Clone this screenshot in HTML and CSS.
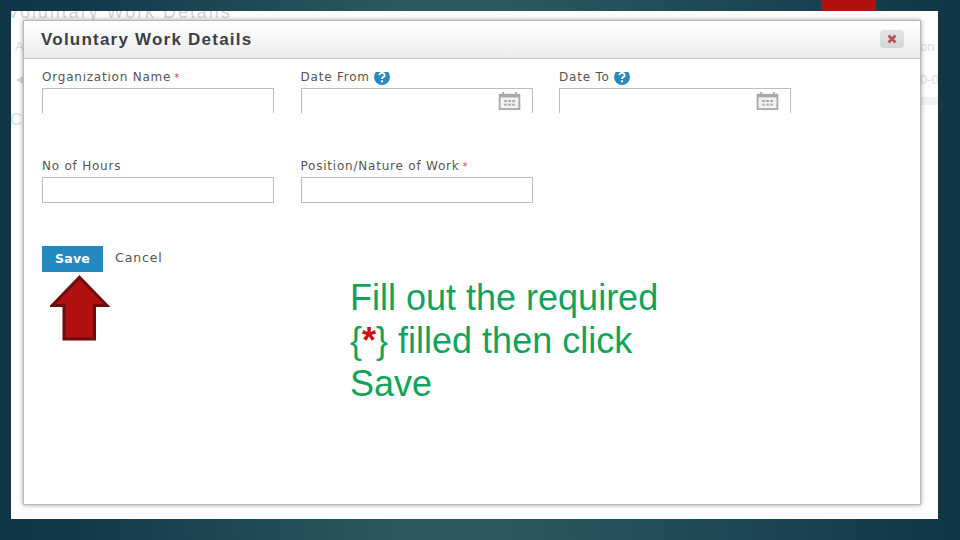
FILE: index.html
```html
<!DOCTYPE html>
<html lang="en">
<head>
<meta charset="utf-8">
<title>Voluntary Work Details</title>
<link rel="stylesheet" href="styles.css">
</head>
<body>
<div class="tab"></div>
<main class="shot">
  <div class="ghost ghost-title">Voluntary Work Details</div>
  <div class="ghost ghost-a">A</div>
  <div class="ghost ghost-arrow"></div>
  <div class="ghost ghost-c">C</div>
  <div class="ghost ghost-on">on</div>
  <div class="ghost ghost-date">0-0</div>
  <div class="ghost-bar"></div>
  <section class="modal">
    <header class="modal-head">
      <h1 class="modal-title">Voluntary Work Details</h1>
      <button class="close" type="button" aria-label="Close">
        <svg width="10" height="10" viewBox="0 0 10 10"><path d="M1.500 1.500l7 7M8.500 1.500l-7 7" stroke="#b8505c" stroke-width="2.600" fill="none"/></svg>
      </button>
    </header>
    <div class="modal-body">
      <div class="row row-cut">
        <div class="field">
          <label class="label">Organization Name <span class="req">*</span></label>
          <div class="input"></div>
        </div>
        <div class="field">
          <label class="label">Date From
            <svg class="help" viewBox="0 0 16 16"><circle cx="8" cy="8" r="8" fill="#2a88bd"/><path d="M5.400 6.200a2.600 2.300 0 1 1 3.900 2c-.9.5-1.300.9-1.300 1.900" stroke="#fff" stroke-width="1.900" fill="none"/><rect x="7" y="11.300" width="2" height="2" fill="#fff"/></svg>
          </label>
          <div class="input">
            <svg class="cal" viewBox="0 0 24 20"><path fill="#a9a9a9" d="M0 2h4V0h2v2h12V0h2v2h4v18H0z"/><rect x="2" y="6" width="20" height="12" fill="#f1f1f1"/><path fill="#a9a9a9" d="M6 9h3v2H6zM10.500 9h3v2h-3zM15 9h3v2h-3zM6 13h3v2H6zM10.500 13h3v2h-3zM15 13h3v2h-3z"/></svg>
          </div>
        </div>
        <div class="field">
          <label class="label">Date To
            <svg class="help" viewBox="0 0 16 16"><circle cx="8" cy="8" r="8" fill="#2a88bd"/><path d="M5.400 6.200a2.600 2.300 0 1 1 3.900 2c-.9.5-1.300.9-1.300 1.900" stroke="#fff" stroke-width="1.900" fill="none"/><rect x="7" y="11.300" width="2" height="2" fill="#fff"/></svg>
          </label>
          <div class="input">
            <svg class="cal" viewBox="0 0 24 20"><path fill="#a9a9a9" d="M0 2h4V0h2v2h12V0h2v2h4v18H0z"/><rect x="2" y="6" width="20" height="12" fill="#f1f1f1"/><path fill="#a9a9a9" d="M6 9h3v2H6zM10.500 9h3v2h-3zM15 9h3v2h-3zM6 13h3v2H6zM10.500 13h3v2h-3zM15 13h3v2h-3z"/></svg>
          </div>
        </div>
      </div>
      <div class="row row-second">
        <div class="field">
          <label class="label">No of Hours</label>
          <div class="input"></div>
        </div>
        <div class="field">
          <label class="label">Position/Nature of Work <span class="req">*</span></label>
          <div class="input"></div>
        </div>
      </div>
      <div class="actions">
        <button class="save" type="button">Save</button>
        <a class="cancel">Cancel</a>
      </div>
    </div>
    <svg class="up-arrow" viewBox="0 0 60 66"><path d="M29.500 2.200 57 30.500H44.500V64H14V30.500H2z" fill="#b01010" stroke="#6e0d0d" stroke-width="3"/></svg>
    <p class="note">Fill out the required<br>{<span class="note-star">*</span>} filled then click<br>Save</p>
  </section>
</main>
</body>
</html>
```

FILE: styles.css
```css
* { box-sizing: border-box; }
html, body { margin: 0; height: 100%; }
body {
  width: 960px;
  height: 540px;
  padding: 11px 22px 21px 11px;
  overflow: hidden;
  position: relative;
  background: linear-gradient(90deg, #0f3645 0, #12394a 8%, #2a5a5e 42%, #2a5a5e 52%, #1a4453 82%, #0f3645 100%);
  font-family: "Liberation Sans", Arial, sans-serif;
}
.tab {
  position: absolute;
  left: 821px;
  top: 0;
  width: 55px;
  height: 11px;
  background: #b01010;
}
.shot {
  position: relative;
  width: 927px;
  height: 508px;
  background: #fff;
  padding: 9px 0 0 12px;
  overflow: hidden;
}
.ghost { position: absolute; color: #d9dcde; font-size: 17px; line-height: 20px; white-space: nowrap; }
.ghost-title { left: -4px; top: -9px; font-size: 18px; letter-spacing: 1.95px; color: #cfd2d5; }
.ghost-a { left: 4px; top: 26px; font-size: 13px; }
.ghost-arrow {
  left: 5px; top: 65px; width: 0; height: 0;
  border-style: solid; border-width: 4px 7px 4px 0;
  border-color: transparent #cfd9e2 transparent transparent;
}
.ghost-c { left: -1px; top: 99px; }
.ghost-on { left: 909px; top: 26px; font-size: 13px; }
.ghost-date { left: 909px; top: 59px; font-size: 13px; }
.ghost-bar { position: absolute; left: 909px; top: 86px; width: 18px; height: 8px; background: #f1f1f1; }
.modal {
  position: relative;
  width: 898px;
  height: 485px;
  background: #fff;
  border: 1px solid #b8b8b8;
  box-shadow: 0 0 5px rgba(0,0,0,.38);
}
.modal-head {
  display: flex;
  align-items: center;
  justify-content: space-between;
  height: 38px;
  padding: 0 16px 2px 17px;
  background: linear-gradient(#fff, #ececec);
  border-bottom: 1px solid #c2c2c2;
}
.modal-title { margin: 2px 0 0; font-size: 17px; font-weight: 700; letter-spacing: 1.22px; color: #3b3f4a; white-space: nowrap; }
.close {
  display: flex;
  align-items: center;
  justify-content: center;
  width: 24px;
  height: 18px;
  padding: 0;
  border: 0;
  border-radius: 4px;
  background: linear-gradient(#e4e4e4, #d6d6d6);
}
.modal-body { padding: 13px 0 0 18px; }
.row {
  display: grid;
  grid-template-columns: repeat(3, 232px);
  column-gap: 26.5px;
}
.row-cut { height: 41px; overflow: hidden; }
.row-second { margin-top: 44px; }
.label {
  display: flex;
  align-items: center;
  gap: 4px;
  height: 17px;
  padding-top: 2px;
  font-family: "DejaVu Sans", sans-serif;
  font-size: 12px;
  line-height: 15px;
  letter-spacing: .78px;
  color: #555;
  white-space: nowrap;
}
.row-cut .label { margin-top: -4px; }
.req { color: #c8434f; margin-left: -1px; font-size: 10px; }
.help { width: 16px; height: 16px; margin-top: -1px; flex: none; }
.input {
  position: relative;
  height: 26px;
  margin-top: 3px;
  border: 1px solid #bdbdbd;
  background: #fff;
}
.cal { position: absolute; right: 11px; top: 3px; width: 23px; height: 18px; }
.actions { display: flex; align-items: flex-start; gap: 12px; margin-top: 43px; }
.save {
  width: 61px;
  height: 26px;
  padding: 0 0 2px;
  border: 0;
  background: #2389bf;
  color: #fff;
  font: 700 12.500px "DejaVu Sans", sans-serif;
  letter-spacing: .25px;
}
.cancel { font-family: "DejaVu Sans", sans-serif; font-size: 12.500px; line-height: 24px; letter-spacing: .9px; color: #555; }
.up-arrow { position: absolute; left: 26px; top: 254px; width: 60px; height: 66px; }
.note {
  position: absolute;
  left: 326px;
  top: 255px;
  margin: 0;
  font-size: 36px;
  line-height: 43px;
  color: #12a35a;
  white-space: nowrap;
}
.note-star { color: #cc1111; font-weight: 700; }
```
